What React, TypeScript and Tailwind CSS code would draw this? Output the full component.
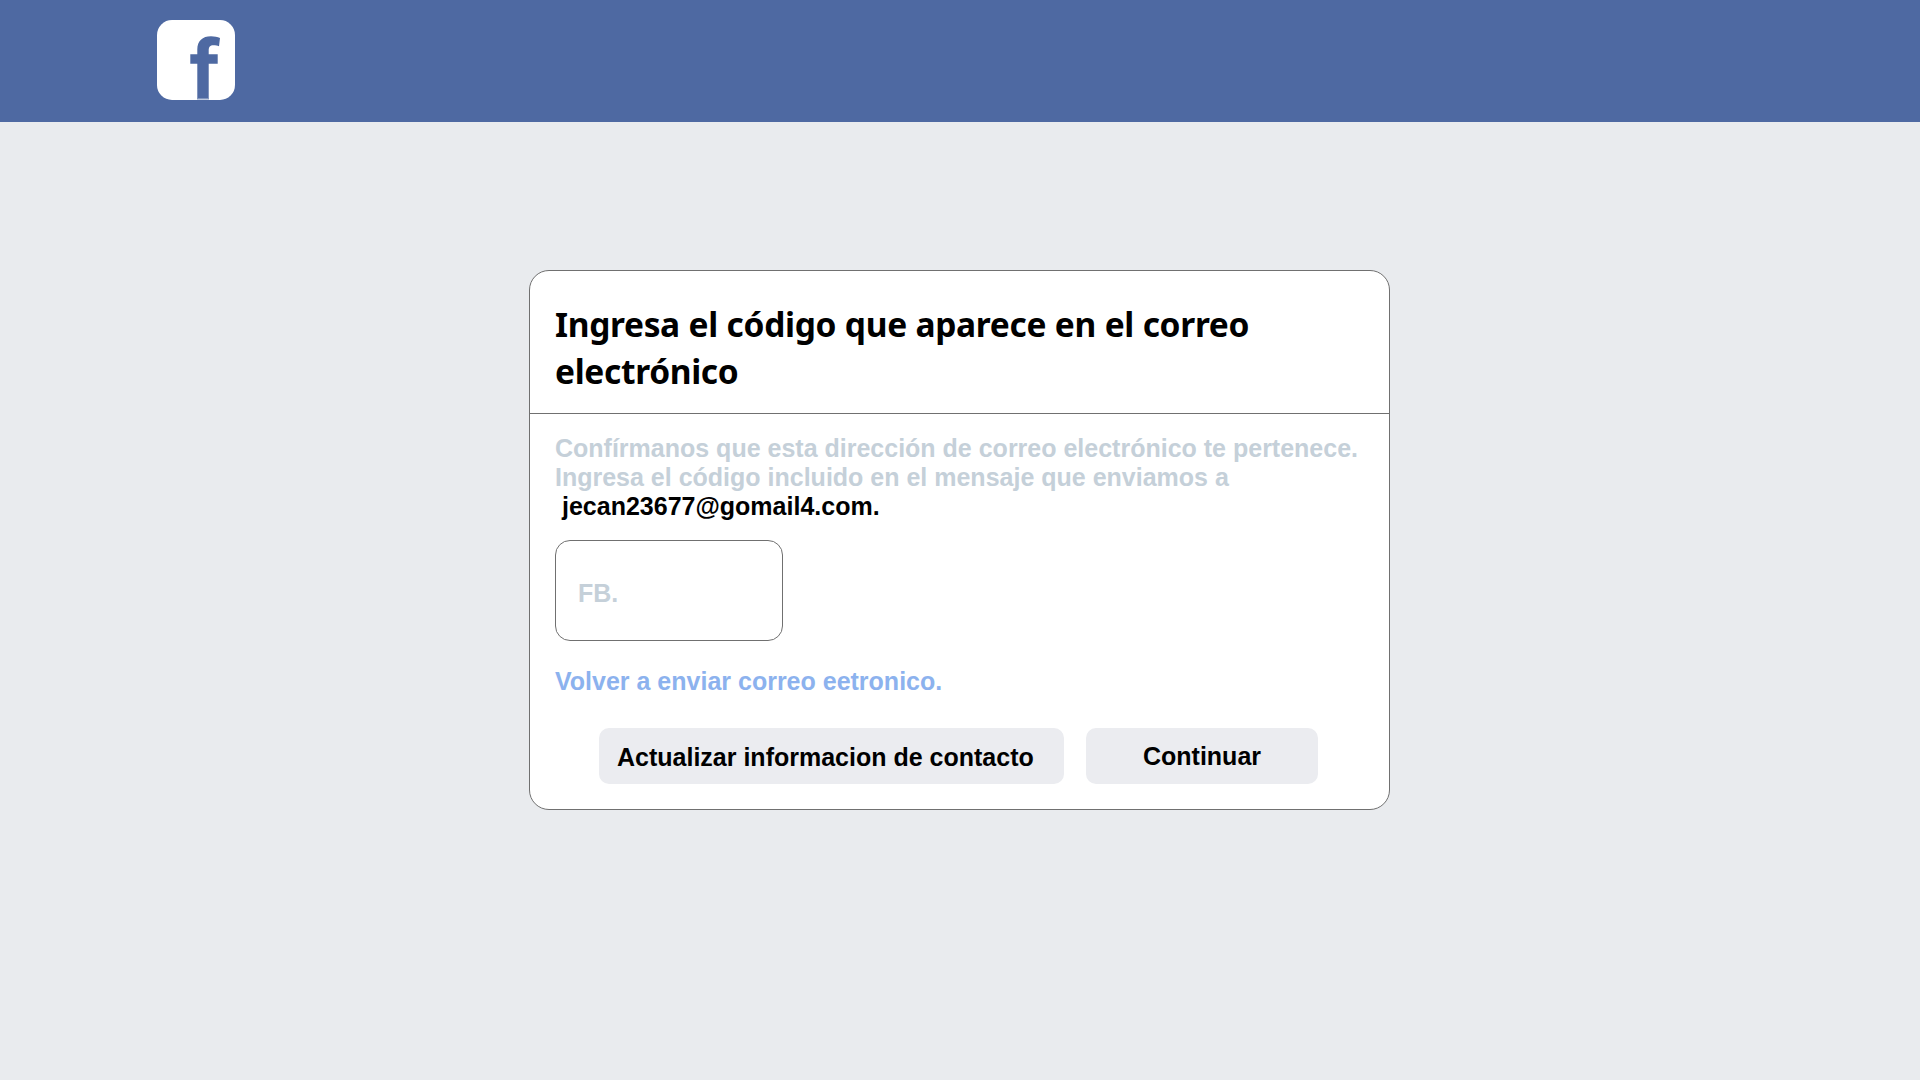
export default function App() {
  return (
    <div className="flex h-[1080px] w-[1920px] flex-col overflow-hidden bg-[#e9ebee] font-['Liberation_Sans',Arial,sans-serif] text-[25px] font-bold">
      <header className="flex h-[122px] shrink-0 bg-[#4e69a2] pt-[20px] pl-[157px]">
        <svg width="78" height="80" viewBox="0 0 78 80" aria-label="Facebook">
          <rect width="78" height="80" rx="15" fill="#fff" />
          <path d="M40.300 78V43.700H33.300V34.300H40.300V29.500C40.300 21 45.500 16.300 54 16.300C57.500 16.300 60.500 17 63 18L62 26.200C60.500 25.600 58.500 25.200 56.500 25.200C53 25.200 51.700 27 51.700 30.500V34.300H60.700V43.700H51.700V78Z" fill="#4e69a2" />
          <path d="M40 78H52V79.500H40Z" fill="#8296be" />
        </svg>
      </header>
      <main className="mt-[148px] ml-[529px] h-[540px] w-[861px] rounded-[20px] border border-[#707070] bg-white">
        <h1 className="h-[143px] border-b border-[#707070] pt-[30px] pl-[25px] font-['Noto_Sans',sans-serif] text-[33.5px] leading-[47px] font-bold tracking-[-0.33px] [word-spacing:0.33px] whitespace-nowrap">
          <span className="block">Ingresa el código que aparece en el correo</span>
          <span className="block">electrónico</span>
        </h1>
        <div className="pt-[20px] pl-[25px] leading-[29px] whitespace-nowrap text-[#c5d0d9]">
          <p>Confírmanos que esta dirección de correo electrónico te pertenece.</p>
          <p>Ingresa el código incluido en el mensaje que enviamos a</p>
          <p className="pl-[7px] text-black">jecan23677@gomail4.com.</p>
          <div className="mt-[19px] flex h-[101px] w-[228px] items-center rounded-[15px] border border-[#707070] pt-[6px] pl-[22px]">FB.</div>
          <a className="mt-[26px] block text-[#8cb2ee]">Volver a enviar correo eetronico.</a>
        </div>
        <div className="mt-[32px] flex gap-[22px] pl-[69px] text-black">
          <button className="h-[56px] w-[465px] rounded-[10px] bg-[#ebecf0] pt-[4px] pl-[18px] text-left">Actualizar informacion de contacto</button>
          <button className="h-[56px] w-[232px] rounded-[10px] bg-[#ebecf0] pt-[2px]">Continuar</button>
        </div>
      </main>
    </div>
  );
}
